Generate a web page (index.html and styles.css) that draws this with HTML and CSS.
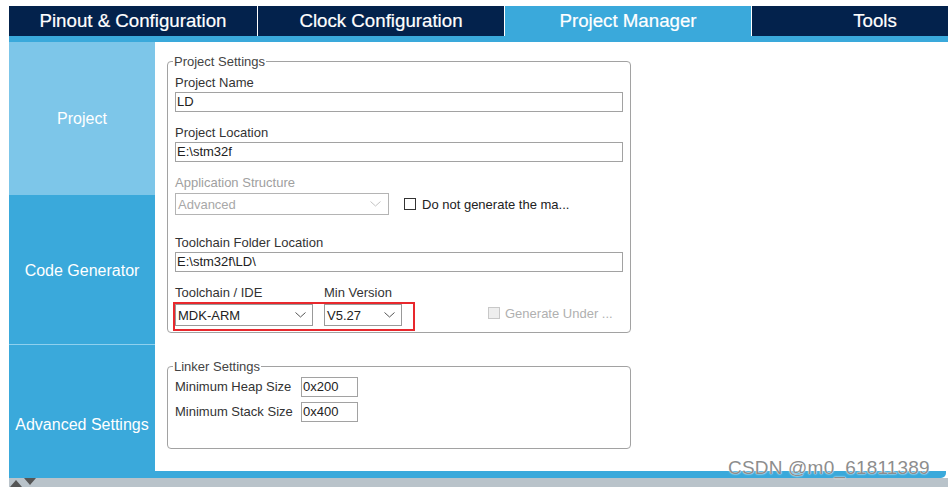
FILE: index.html
```html
<!DOCTYPE html>
<html lang="en">
<head>
    <meta charset="UTF-8">
    <title>Project Manager</title>
    <link rel="stylesheet" href="styles.css">
</head>
<body>
    <div class="tabs">
        <div class="tab">Pinout &amp; Configuration</div>
        <div class="tab">Clock Configuration</div>
        <div class="tab active">Project Manager</div>
        <div class="tab">Tools</div>
    </div>
    <div class="strip"></div>

    <div class="main">
        <div class="sidebar">
            <div class="nav-item selected">Project</div>
            <div class="nav-item">Code Generator</div>
            <div class="nav-item last">Advanced Settings</div>
        </div>

        <div class="panel">
            <!-- Project Settings -->
            <fieldset class="group">
                <legend>Project Settings</legend>

                <div class="lbl">Project Name</div>
                <div class="text-box wide">LD</div>

                <div class="lbl">Project Location</div>
                <div class="text-box wide">E:\stm32f</div>

                <div class="lbl disabled">Application Structure</div>
                <div class="app-row">
                    <div class="combo structure disabled">
                        <span>Advanced</span>
                        <svg width="11" height="6" viewBox="0 0 11 6"><polyline points="0.5,0.5 5.5,5 10.5,0.5" /></svg>
                    </div>
                    <div class="check">
                        <span class="box"></span>
                        <span>Do not generate the ma...</span>
                    </div>
                </div>

                <div class="lbl">Toolchain Folder Location</div>
                <div class="text-box wide">E:\stm32f\LD\</div>

                <div class="tool-row">
                    <div class="col">
                        <div class="lbl tight">Toolchain / IDE</div>
                        <div class="combo ide">
                            <span>MDK-ARM</span>
                            <svg width="11" height="6" viewBox="0 0 11 6"><polyline points="0.5,0.5 5.5,5 10.5,0.5" /></svg>
                        </div>
                    </div>
                    <div class="col version">
                        <div class="lbl tight">Min Version</div>
                        <div class="combo ver">
                            <span>V5.27</span>
                            <svg width="11" height="6" viewBox="0 0 11 6"><polyline points="0.5,0.5 5.5,5 10.5,0.5" /></svg>
                        </div>
                    </div>
                    <div class="check disabled gen-under">
                        <span class="box"></span>
                        <span>Generate Under ...</span>
                    </div>
                    <div class="highlight"></div>
                </div>
            </fieldset>

            <!-- Linker Settings -->
            <fieldset class="group linker">
                <legend>Linker Settings</legend>
                <div class="linker-grid">
                    <div class="grid-lbl">Minimum Heap Size</div>
                    <div class="text-box small">0x200</div>
                    <div class="grid-lbl">Minimum Stack Size</div>
                    <div class="text-box small">0x400</div>
                </div>
            </fieldset>
        </div>
    </div>

    <div class="bottom-bar"></div>
    <div class="scroll-bar">
        <span class="arrow up"></span>
        <span class="arrow down"></span>
    </div>

    <div class="watermark">CSDN @m0_61811389</div>
</body>
</html>
```

FILE: styles.css
```css
:root {
    --navy: #03224c;
    --blue: #3aa9db;
    --light-blue: #7dc6e9;
    --border: #a2a2a2;
    --text: #333;
}

* {
    box-sizing: border-box;
}

body {
    margin: 0;
    padding: 6px 0 0 9px;
    width: 948px;
    height: 487px;
    overflow: hidden;
    position: relative;
    background: #fff;
    font-family: 'Liberation Sans', Arial, sans-serif;
    color: var(--text);
}

/* top tabs */
.tabs {
    display: flex;
    height: 30px;
    background: var(--navy);
    overflow: hidden;
}

.tab {
    flex: 0 0 247px;
    display: flex;
    align-items: center;
    justify-content: center;
    border-left: 1px solid #fff;
    color: #fff;
    font-size: 18.7px;
    -webkit-text-stroke: 0.2px #fff;
}

.tab:first-child {
    flex-basis: 248px;
    border-left: none;
}

.tab.active {
    background: var(--blue);
}

.strip {
    height: 6px;
    background: var(--blue);
}

/* body */
.main {
    display: flex;
    height: 429px;
}

.sidebar {
    width: 146px;
    flex-shrink: 0;
    background: var(--blue);
    overflow: hidden;
}

.nav-item {
    height: 150px;
    display: flex;
    align-items: center;
    justify-content: center;
    padding-top: 3px;
    color: #fff;
    font-size: 16px;
    border-bottom: 1px solid #8fd0ee;
}

.nav-item.selected {
    height: 153px;
    padding-top: 0;
    background: var(--light-blue);
    border-bottom: none;
}

.nav-item.last {
    height: 156px;
    border-bottom: none;
}

.panel {
    flex: 1;
    background: #fff;
    padding: 12px 0 0 12px;
}

/* fieldsets */
.group {
    width: 464px;
    margin: 0;
    padding: 6px 7px 6px 7px;
    border: 1px solid var(--border);
    border-radius: 4px;
}

.group legend {
    margin-left: -2px;
    padding: 0 1px;
    font-size: 13px;
    line-height: 15px;
    color: #444;
}

.lbl {
    height: 15px;
    line-height: 15px;
    font-size: 13px;
    margin-bottom: 2px;
    white-space: nowrap;
}

.lbl.disabled {
    color: #a0a0a0;
    margin-bottom: 3px;
}

.lbl.tight {
    margin-bottom: 4px;
}

.text-box {
    height: 20px;
    border: 1px solid var(--border);
    padding-left: 1px;
    font-size: 13px;
    line-height: 18px;
    color: #222;
    white-space: nowrap;
}

.text-box.wide {
    width: 448px;
    margin-bottom: 13px;
}

.text-box.small {
    width: 57px;
}

.combo {
    height: 22px;
    display: flex;
    align-items: center;
    justify-content: space-between;
    border: 1px solid #999;
    padding: 0 6px 0 2px;
    font-size: 13px;
    color: #222;
}

.combo svg polyline {
    fill: none;
    stroke: #555;
    stroke-width: 1;
}

.combo.disabled {
    border-color: #b4b4b4;
    color: #a8a8a8;
}

.combo.disabled svg polyline {
    stroke: #c4c4c4;
}

.app-row {
    display: flex;
    align-items: center;
    margin-bottom: 20px;
}

.combo.structure {
    width: 214px;
    padding-right: 7px;
}

.check {
    display: flex;
    align-items: center;
    gap: 6px;
    margin-left: 15px;
    font-size: 13px;
    color: #222;
}

.check .box {
    width: 12px;
    height: 12px;
    border: 1px solid #333;
    background: #fff;
}

.check.disabled {
    color: #b0b0b0;
}

.check.disabled .box {
    border-color: #c8c8c8;
    background: #eee;
}

.tool-row {
    display: flex;
    align-items: flex-end;
    position: relative;
}

.combo.ide {
    width: 138px;
}

.col.version {
    margin-left: 11px;
}

.combo.ver {
    width: 78px;
}

.gen-under {
    margin-left: 86px;
    margin-bottom: 2px;
    height: 22px;
    gap: 5px;
}

.highlight {
    position: absolute;
    left: -2px;
    top: 17px;
    width: 242px;
    height: 29px;
    border: 2px solid #e8282d;
}

.linker {
    margin-top: 26px;
    padding: 3px 7px 26px 7px;
}

.linker-grid {
    display: grid;
    grid-template-columns: 126px 57px;
    grid-auto-rows: 20px;
    row-gap: 5px;
}

.grid-lbl {
    font-size: 13px;
    line-height: 20px;
    white-space: nowrap;
}

/* bottom */
.bottom-bar {
    height: 7px;
    margin-right: 2px;
    background: var(--blue);
    border-radius: 0 0 5px 0;
}

.scroll-bar {
    height: 9px;
    background: #b9c3ca;
    display: flex;
    align-items: flex-end;
    gap: 2px;
    padding-left: 1px;
}

.arrow {
    width: 0;
    height: 0;
    border-left: 6px solid transparent;
    border-right: 6px solid transparent;
}

.arrow.up {
    border-bottom: 7px solid #555;
}

.arrow.down {
    align-self: flex-start;
    border-top: 7px solid #555;
}

.watermark {
    position: absolute;
    left: 728px;
    top: 457px;
    font-size: 19px;
    color: #8d8d8d;
    text-shadow: 0 0 2px #fff, 0 0 1px #fff;
    letter-spacing: 0.2px;
}
```
